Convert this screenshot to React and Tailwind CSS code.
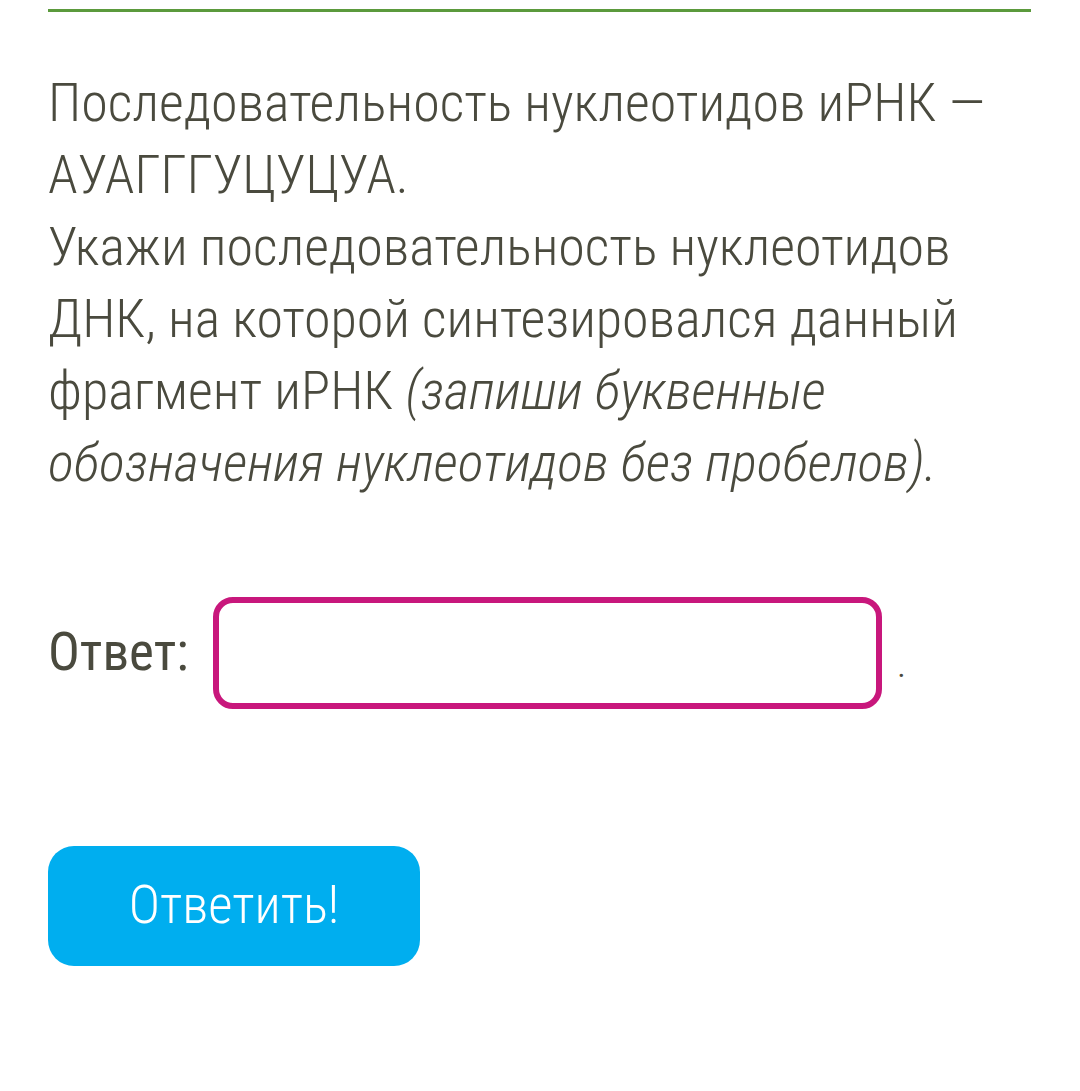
export default function App() {
  const font = { fontFamily: '"Roboto Condensed", Roboto, "Liberation Sans", sans-serif', fontStretch: 'condensed' };
  return (
    <div className="w-[1080px] h-[1091px] bg-white overflow-hidden" style={font}>
      <div className="pt-[9px] px-[48px]">
        <div className="h-[3px] w-[983px] bg-[#5b9a3c]" />
        <div className="mt-[55px] text-[54px] leading-[72px] font-light text-[#4a4a3e] whitespace-nowrap">
          <div>Последовательность нуклеотидов иРНК —</div>
          <div>АУАГГГУЦУЦУА.</div>
          <div>
            Укажи последовательность нуклеотидов<br />
            ДНК, на которой синтезировался данный<br />
            фрагмент иРНК <i>(запиши буквенные<br />обозначения нуклеотидов без пробелов).</i>
          </div>
        </div>
        <div className="mt-[98px] flex items-end">
          <div className="flex items-center">
            <span className="text-[53px] text-[#4a4a3e] font-normal mr-[24px]">Ответ:</span>
            <div className="w-[669px] h-[112px] border-[6px] border-[#c8177c] rounded-[20px]" />
          </div>
          <span className="text-[30px] text-[#4a4a3e] ml-[16px] mb-[20px]">.</span>
        </div>
        <div className="mt-[137px] w-[372px] h-[120px] rounded-[26px] bg-[#00aeef] flex items-center justify-center text-white text-[53px] font-light">
          Ответить!
        </div>
      </div>
    </div>
  );
}
